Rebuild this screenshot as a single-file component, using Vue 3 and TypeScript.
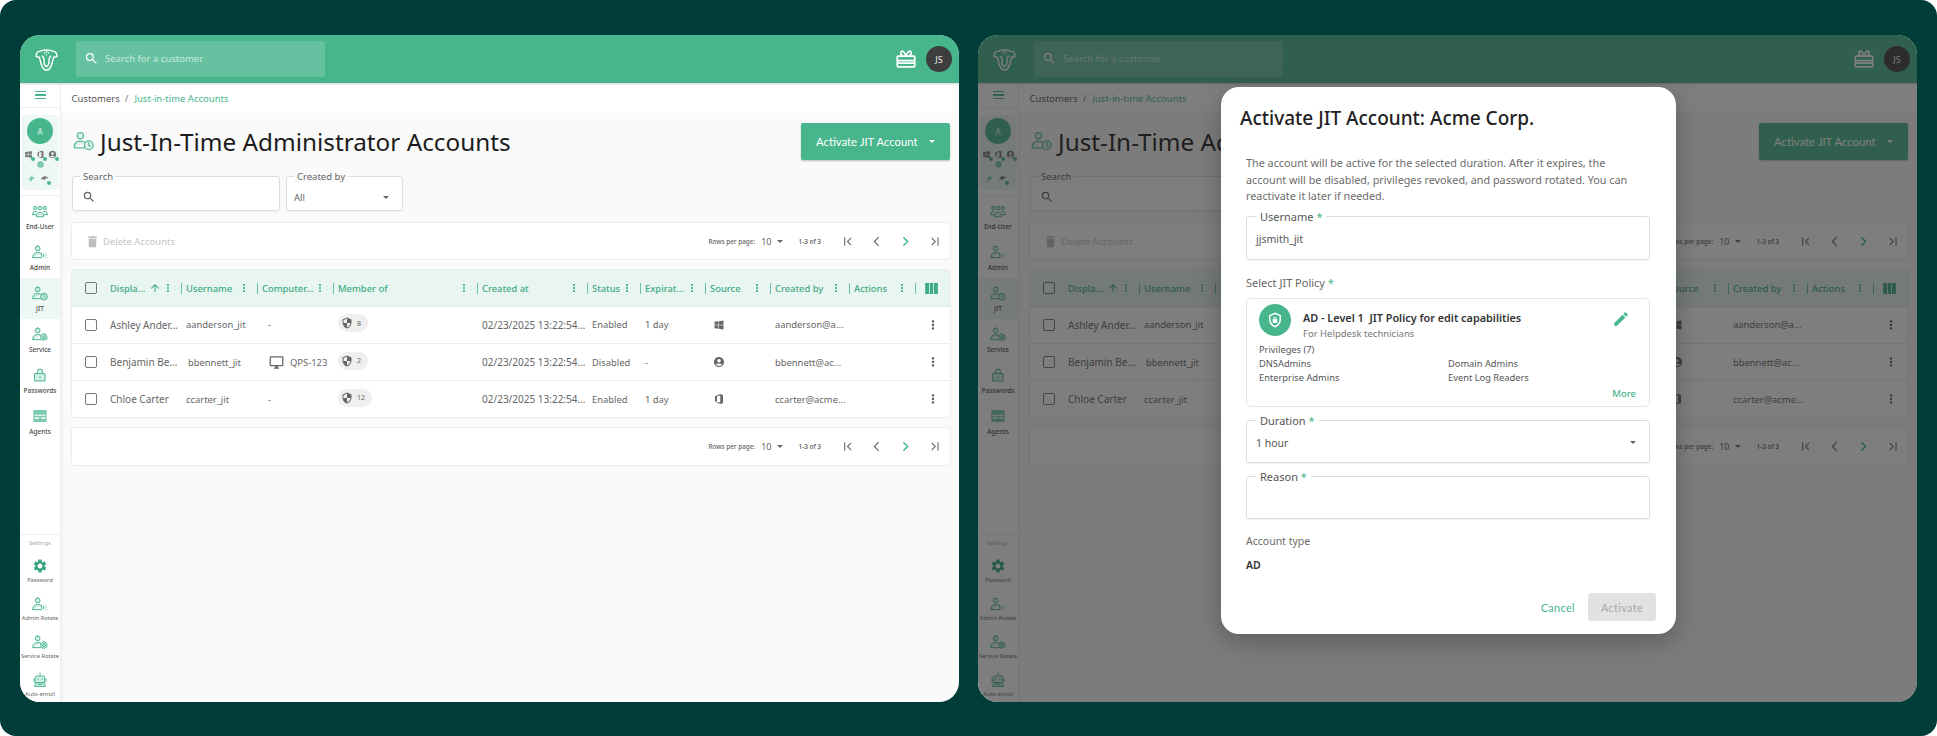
<script setup lang="ts">
const icons: Record<string, string> = {
  magnify: 'M15.5 14h-.79l-.28-.27A6.47 6.47 0 0 0 16 9.5 6.5 6.5 0 1 0 9.5 16c1.61 0 3.09-.59 4.23-1.57l.27.28v.79l5 4.99L20.49 19l-4.99-5zm-6 0C7.01 14 5 11.99 5 9.5S7.01 5 9.5 5 14 7.01 14 9.5 11.99 14 9.5 14z',
  trash: 'M6 19c0 1.1.9 2 2 2h8c1.1 0 2-.9 2-2V7H6v12zM19 4h-3.5l-1-1h-5l-1 1H5v2h14V4z',
  dots: 'M12 8c1.1 0 2-.9 2-2s-.9-2-2-2-2 .9-2 2 .9 2 2 2zm0 2c-1.1 0-2 .9-2 2s.9 2 2 2 2-.9 2-2-.9-2-2-2zm0 6c-1.1 0-2 .9-2 2s.9 2 2 2 2-.9 2-2-.9-2-2-2z',
  up: 'M4 12l1.41 1.41L11 7.83V20h2V7.83l5.58 5.59L20 12l-8-8-8 8z',
  columns: 'M4 5v14h5V5H4zm6 0v14h4V5h-4zm5 0v14h5V5h-5z',
  shield: 'M12 1L3 5v6c0 5.55 3.84 10.74 9 12 5.16-1.26 9-6.45 9-12V5l-9-4zm0 10.99h7c-.53 4.12-3.28 7.79-7 8.94V12H5V6.3l7-3.11v8.8z',
  monitor: 'M21 2H3c-1.1 0-2 .9-2 2v12c0 1.1.9 2 2 2h7v2H8v2h8v-2h-2v-2h7c1.1 0 2-.9 2-2V4c0-1.1-.9-2-2-2zm0 14H3V4h18v12z',
  windows: 'M3 5.5l7.5-1v7H3zM11.5 4.3L21 3v8.5h-9.5zM3 12.5h7.5v7L3 18.5zM11.5 12.5H21V21l-9.5-1.3z',
  account: 'M12 2C6.48 2 2 6.48 2 12s4.48 10 10 10 10-4.48 10-10S17.52 2 12 2zm0 4c1.93 0 3.5 1.57 3.5 3.5S13.93 13 12 13s-3.5-1.57-3.5-3.5S10.07 6 12 6zm0 14c-2.03 0-4.43-.82-6.14-2.88C7.55 15.8 9.68 15 12 15s4.45.8 6.14 2.12C16.43 19.18 14.03 20 12 20z',
  office: 'M4 6.5L14.5 2 20 4v16l-5.5 2L4 17.5l10.5 1.5V5L8 6.6v9.2l-4 1.7z',
  pencil: 'M3 17.25V21h3.75L17.81 9.94l-3.75-3.75L3 17.25zM20.71 7.04a1 1 0 0 0 0-1.41l-2.34-2.34a1 1 0 0 0-1.41 0l-1.83 1.83 3.75 3.75 1.83-1.83z',
  gear: 'M19.14 12.94c.04-.3.06-.61.06-.94 0-.32-.02-.64-.07-.94l2.03-1.58a.49.49 0 0 0 .12-.61l-1.92-3.32a.49.49 0 0 0-.59-.22l-2.39.96c-.5-.38-1.03-.7-1.62-.94l-.36-2.54a.48.48 0 0 0-.48-.41h-3.84c-.24 0-.43.17-.47.41l-.36 2.54c-.59.24-1.13.57-1.62.94l-2.39-.96c-.22-.08-.47 0-.59.22L2.74 8.87c-.12.21-.08.47.12.61l2.03 1.58c-.05.3-.09.63-.09.94s.02.64.07.94l-2.03 1.58a.49.49 0 0 0-.12.61l1.92 3.32c.12.22.37.29.59.22l2.39-.96c.5.38 1.03.7 1.62.94l.36 2.54c.05.24.24.41.48.41h3.84c.24 0 .44-.17.47-.41l.36-2.54c.59-.24 1.13-.56 1.62-.94l2.39.96c.22.08.47 0 .59-.22l1.92-3.32c.12-.22.07-.47-.12-.61l-2.01-1.58zM12 15.6c-1.98 0-3.6-1.62-3.6-3.6s1.62-3.6 3.6-3.6 3.6 1.62 3.6 3.6-1.62 3.6-3.6 3.6z',
  agents: 'M2 3h20v18H2zM4 10h16v1.5H4zM4 14h7v2H4zM14 14h6v2h-6z',
  lockShield: 'M12 2L4 5.5V11c0 5 3.4 9.7 8 11 4.6-1.3 8-6 8-11V5.5L12 2zm0 2.2l6 2.6V11c0 3.9-2.5 7.6-6 8.8-3.5-1.2-6-4.9-6-8.8V6.800zM12 7.500a2.300 2.300 0 0 0-2.300 2.300v1.200H9v5h6v-5h-.7V9.800A2.300 2.300 0 0 0 12 7.500zm0 1.300a1 1 0 0 1 1 1v1.200h-2V9.800a1 1 0 0 1 1-1z',
}

const person = 'M8.500 3a3.600 3.600 0 1 1 0 7.200A3.600 3.600 0 1 1 8.500 3zM1.500 20.500v-2.500C1.500 14.800 4.500 12.800 8.500 12.800c1.700 0 3.200.3 4.500 1M13 20.500H1.500'
const clock = 'M18 12.500a5 5 0 1 1 0 10 5 5 0 1 1 0-10zM18 14.800V17.500l1.800 1'
const cog = 'M18 11.500l1 1.700 2-.3.6 1.900 1.400 1.200-1.100 1.700.3 2-1.900.6-1.300 1.400-1.700-1-1.800.7-.7-1.900-1.800-.9.500-1.900-.7-1.800 1.800-.8.900-1.800zM18 15a2 2 0 1 1 0 4 2 2 0 1 1 0-4z'
const adminMark = 'M14.500 14v6.500M17.500 15.500v3.500M21 14v.1M21 17v.1M21 20v.1'
const team = 'M12 5a2.800 2.800 0 1 1 0 5.600A2.800 2.800 0 1 1 12 5zM4.800 5a2.500 2.500 0 1 1 0 5A2.500 2.500 0 1 1 4.800 5zM19.200 5a2.500 2.500 0 1 1 0 5 2.500 2.500 0 1 1 0-5zM1 17.500c0-3 1.600-5 3.800-5 1 0 1.800.3 2.500.9M23 17.500c0-3-1.600-5-3.800-5-1 0-1.800.3-2.500.9M6.500 20c0-3.500 2.500-6 5.500-6s5.500 2.500 5.500 6zM1 17.500h5M23 17.500h-5'
const lock = 'M4.500 10h15v11h-15zM8 10V7a4 4 0 0 1 8 0v3M12 14.500v2'
const robot = 'M12 1.500V4M5 8a2 2 0 0 1 2-2h10a2 2 0 0 1 2 2v8H5zM9 10.500v1M15 10.500v1M3 10v4M21 10v4M4 21c0-3 2-5 4-5h8c2 0 4 2 4 5zM9 18.500h6'

type NavItem = { label: string; d: string; mode: 'line' | 'fill' | 'pale'; active?: boolean }
const navItems: NavItem[] = [
  { label: 'End-User', d: team, mode: 'line' },
  { label: 'Admin', d: person + adminMark, mode: 'line' },
  { label: 'JIT', d: person + clock, mode: 'line', active: true },
  { label: 'Service', d: person + cog, mode: 'line' },
  { label: 'Passwords', d: lock, mode: 'line' },
  { label: 'Agents', d: icons.agents, mode: 'pale' },
]
const settingItems: NavItem[] = [
  { label: 'Password', d: icons.gear, mode: 'fill' },
  { label: 'Admin Rotate', d: person + adminMark, mode: 'line' },
  { label: 'Service Rotate', d: person + cog, mode: 'line' },
  { label: 'Auto-enroll', d: robot, mode: 'line' },
]

const columns = [
  { label: '', sep: false, kebab: false, check: true },
  { label: 'Displa...', sep: false, kebab: true, sort: true },
  { label: 'Username', sep: true, kebab: true },
  { label: 'Computer...', sep: true, kebab: true },
  { label: 'Member of', sep: true, kebab: true },
  { label: 'Created at', sep: true, kebab: true },
  { label: 'Status', sep: true, kebab: true },
  { label: 'Expirat...', sep: true, kebab: true },
  { label: 'Source', sep: true, kebab: true },
  { label: 'Created by', sep: true, kebab: true },
  { label: 'Actions', sep: true, kebab: true },
  { label: '', sep: true, kebab: false, picker: true },
]

const rows = [
  { name: 'Ashley Ander...', user: 'aanderson_jit', nudge: false, computer: '', groups: '8', status: 'Enabled', expiry: '1 day', source: 'windows', email: 'aanderson@a...' },
  { name: 'Benjamin Be...', user: 'bbennett_jit', nudge: true, computer: 'QPS-123', groups: '2', status: 'Disabled', expiry: '-', source: 'account', email: 'bbennett@ac...' },
  { name: 'Chloe Carter', user: 'ccarter_jit', nudge: false, computer: '', groups: '12', status: 'Enabled', expiry: '1 day', source: 'office', email: 'ccarter@acme...' },
]

const windows = [{ dialog: false }, { dialog: true }]
const pagerIcons = ['M17 7l-5 5 5 5M8 6v12', 'M15 6l-6 6 6 6', 'M9 6l6 6-6 6', 'M8 7l5 5-5 5M17 6v12']
</script>

<template>
  <div class="stage">
    <section v-for="(win, w) in windows" :key="w" class="window">
      <header class="topbar">
        <svg class="logo" viewBox="0 0 24 24">
          <path d="M1 8.500C1.500 4.500 3.500 3.500 5 3.500 8 1.500 16 1.500 19 3.500 20.500 3.500 22.500 4.500 23 8.500 22 9.500 20.500 9.500 19.500 9.500L17.500 17C16.500 20.500 14 23 12 23S7.500 20.500 6.500 17L4.500 9.500C3.500 9.500 2 9.500 1 8.500Z" />
          <path d="M7.500 8.500C9.500 9.500 9.800 12 9.500 16C10 18 11 19 12 19.500C13 19 14 18 14.500 16C14.200 12 14.500 9.500 16.500 8.500M10 5v.1M12 4v.1M14 5v.1M12 7v.1" />
        </svg>
        <div class="global-search">
          <svg class="search-ico" viewBox="0 0 24 24"><path :d="icons.magnify" /></svg>
          <span>Search for a customer</span>
        </div>
        <svg class="gift" viewBox="0 0 24 24">
          <path d="M2.500 8.500h19a1 1 0 0 1 1 1v11a1 1 0 0 1-1 1h-19a1 1 0 0 1-1-1v-11a1 1 0 0 1 1-1zM1.500 14h21M1.500 17h21M12 8C10.500 5 9.500 2.500 7.500 2.500S5 6 7.500 8M12 8c1.500-3 2.500-5.500 4.500-5.500S19 6 16.500 8" />
        </svg>
        <div class="me">JS</div>
      </header>

      <div class="workspace">
        <aside class="rail">
          <div class="burger"><i></i><i></i><i></i></div>
          <div class="tenant">
            <div class="tenant-avatar">A</div>
            <div class="tiny-row">
              <span class="tiny"><svg viewBox="0 0 24 24"><path :d="icons.windows" /></svg></span>
              <span class="tiny"><svg viewBox="0 0 24 24"><path :d="icons.office" /></svg></span>
              <span class="tiny"><svg viewBox="0 0 24 24"><path :d="icons.account" /></svg></span>
            </div>
            <svg class="tiny-globe" viewBox="0 0 24 24"><path d="M12 2a10 10 0 1 0 0 20 10 10 0 0 0 0-20zM6 6l12 12M18 6L6 18" /></svg>
            <div class="tiny-row low">
              <svg class="tiny-bolt" viewBox="0 0 24 24"><path d="M16 1L3 15h7l-3 8 14-15h-8z" /></svg>
              <span class="tiny"><svg viewBox="0 0 24 24"><path d="M3 15c0-5 5-9 10-9 4 0 8 2 9 6-4-1-7 0-9 1l-1 5-2-4c-2 0-4 0-7 1z" /></svg></span>
            </div>
          </div>
          <nav class="nav">
            <a v-for="item in navItems" :key="item.label" class="nav-item bold" :class="{ on: item.active }">
              <svg viewBox="0 0 24 24" :class="item.mode"><path :d="item.d" /></svg>
              <span>{{ item.label }}</span>
            </a>
          </nav>
          <div class="settings">
            <div class="settings-title">Settings</div>
            <a v-for="item in settingItems" :key="item.label" class="nav-item small">
              <svg viewBox="0 0 24 24" :class="item.mode"><path :d="item.d" /></svg>
              <span>{{ item.label }}</span>
            </a>
          </div>
        </aside>

        <main class="content">
          <div class="crumbs"><span>Customers</span><em>/</em><b>Just-in-time Accounts</b></div>
          <div class="page">
            <div class="title-row">
              <svg class="title-ico" viewBox="0 0 24 24"><path :d="person + clock" /></svg>
              <h1>Just-In-Time Administrator Accounts</h1>
              <button class="primary">Activate JIT Account<i class="caret light"></i></button>
            </div>
            <div class="filters">
              <div class="field search">
                <label>Search</label>
                <svg viewBox="0 0 24 24"><path :d="icons.magnify" /></svg>
              </div>
              <div class="field created">
                <label>Created by</label>
                <span>All</span><i class="caret"></i>
              </div>
            </div>
            <div class="card bar">
              <div class="del"><svg viewBox="0 0 24 24"><path :d="icons.trash" /></svg>Delete Accounts</div>
              <div class="pager">
                <span class="rpp">Rows per page:</span><span class="rpp-val">10</span><i class="caret"></i>
                <span class="range">1-3 of 3</span>
                <svg v-for="(d, p) in pagerIcons" :key="p" viewBox="0 0 24 24" :class="{ go: p === 2 }"><path :d="d" /></svg>
              </div>
            </div>
            <div class="card table">
              <div class="thead grid">
                <div v-for="(c, i) in columns" :key="i" class="th" :class="{ sep: c.sep, center: c.check }">
                  <span v-if="c.check" class="box"></span>
                  <span>{{ c.label }}</span>
                  <svg v-if="c.sort" class="sort" viewBox="0 0 24 24"><path :d="icons.up" /></svg>
                  <svg v-if="c.kebab" class="kebab" viewBox="0 0 24 24"><path :d="icons.dots" /></svg>
                  <svg v-if="c.picker" class="picker" viewBox="0 0 24 24"><path :d="icons.columns" /></svg>
                </div>
              </div>
              <div v-for="r in rows" :key="r.user" class="tr grid">
                <div class="td center"><span class="box"></span></div>
                <div class="td first wide">{{ r.name }}</div>
                <div class="td" :class="{ nudge: r.nudge }">{{ r.user }}</div>
                <div class="td">
                  <template v-if="r.computer">
                    <svg class="pc" viewBox="0 0 24 24"><path :d="icons.monitor" /></svg>{{ r.computer }}
                  </template>
                  <span v-else class="dash">-</span>
                </div>
                <div class="td"><span class="chip"><svg viewBox="0 0 24 24"><path :d="icons.shield" /></svg>{{ r.groups }}</span></div>
                <div class="td wide">02/23/2025 13:22:54...</div>
                <div class="td">{{ r.status }}</div>
                <div class="td">{{ r.expiry }}</div>
                <div class="td"><svg class="src" viewBox="0 0 24 24"><path :d="icons[r.source]" /></svg></div>
                <div class="td">{{ r.email }}</div>
                <div class="td"></div>
                <div class="td center"><svg class="row-menu" viewBox="0 0 24 24"><path :d="icons.dots" /></svg></div>
              </div>
            </div>
            <div class="card bar end">
              <div class="pager">
                <span class="rpp">Rows per page:</span><span class="rpp-val">10</span><i class="caret"></i>
                <span class="range">1-3 of 3</span>
                <svg v-for="(d, p) in pagerIcons" :key="p" viewBox="0 0 24 24" :class="{ go: p === 2 }"><path :d="d" /></svg>
              </div>
            </div>
          </div>
        </main>
      </div>

      <div v-if="win.dialog" class="scrim">
        <div class="dialog">
          <h2>Activate JIT Account: Acme Corp.</h2>
          <div class="dialog-body">
            <p class="intro">The account will be active for the selected duration. After it expires, the account will be disabled, privileges revoked, and password rotated. You can reactivate it later if needed.</p>
            <div class="input tall">
              <label>Username <u>*</u></label>
              <span>jjsmith_jit</span>
            </div>
            <div class="policy-label">Select JIT Policy <u>*</u></div>
            <div class="policy">
              <div class="policy-head">
                <div class="policy-badge"><svg viewBox="0 0 24 24"><path fill-rule="evenodd" :d="icons.lockShield" /></svg></div>
                <div class="policy-name">
                  <strong>AD - Level 1&nbsp; JIT Policy for edit capabilities</strong>
                  <small>For Helpdesk technicians</small>
                </div>
                <svg class="pen" viewBox="0 0 24 24"><path :d="icons.pencil" /></svg>
              </div>
              <div class="priv-title">Privileges (7)</div>
              <div class="priv-grid">
                <span>DNSAdmins</span><span>Domain Admins</span>
                <span>Enterprise Admins</span><span>Event Log Readers</span>
              </div>
              <div class="more">More</div>
            </div>
            <div class="input">
              <label>Duration <u>*</u></label>
              <span>1 hour</span><i class="caret"></i>
            </div>
            <div class="input">
              <label>Reason <u>*</u></label>
            </div>
            <div class="type-label">Account type</div>
            <div class="type-value">AD</div>
          </div>
          <div class="dialog-foot">
            <a class="cancel">Cancel</a>
            <button class="activate" disabled>Activate</button>
          </div>
        </div>
      </div>
    </section>
  </div>
</template>

<style>
html, body { margin: 0; background: #ffffff; }
</style>

<style scoped>
* { box-sizing: border-box; }
.stage {
  width: 1937px; height: 736px; background: #003d38; border-radius: 16px;
  padding: 35px 20px 34px; display: flex; gap: 19px;
  font-family: "Noto Sans", "Open Sans", sans-serif; color: #555; overflow: hidden;
}
.window {
  position: relative; width: 939px; height: 667px; border-radius: 20px; overflow: hidden;
  background: #fafafa; display: flex; flex-direction: column;
}
svg { display: block; fill: currentColor; flex: none; }

.topbar { height: 48px; background: #48b68d; display: flex; align-items: center; padding: 0 7px 0 15px; box-shadow: 0 1px 2px rgba(0,0,0,.2); position: relative; z-index: 1; flex: none; }
.logo { width: 23px; height: 23px; fill: none; stroke: #fff; stroke-width: 1.500; stroke-linejoin: round; stroke-linecap: round; }
.global-search { width: 249px; height: 36px; margin-left: 18px; background: rgba(255,255,255,.16); border-radius: 3px; display: flex; align-items: center; padding: 0 0 1px 8px; color: rgba(255,255,255,.68); font-size: 9.500px; }
.search-ico { width: 15px; height: 15px; margin-right: 6px; color: #fff; }
.gift { width: 20px; height: 20px; margin-left: auto; margin-right: 10px; fill: none; stroke: #fff; stroke-width: 2; stroke-linejoin: round; }
.me { width: 26px; height: 26px; border-radius: 50%; background: #3d3d3d; color: #eee; font-size: 9px; display: flex; align-items: center; justify-content: center; }

.workspace { flex: 1; display: flex; min-height: 0; }
.rail { width: 41px; background: #fff; border-right: 1px solid #eee; box-shadow: 1px 0 2px rgba(0,0,0,.05); display: flex; flex-direction: column; flex: none; }
.burger { height: 25px; border-bottom: 1px solid #eee; display: flex; flex-direction: column; justify-content: center; align-items: center; gap: 2px; flex: none; }
.burger i { width: 11px; height: 1.300px; background: #48b68d; }
.tenant { margin: 7px 1.500px 5px; height: 75px; background: #edf7f3; border-radius: 4px; display: flex; flex-direction: column; align-items: center; padding-top: 3px; flex: none; }
.tenant-avatar { width: 26px; height: 26px; border-radius: 50%; background: #48b68d; color: #e9f6f1; font-size: 8px; display: flex; align-items: center; justify-content: center; }
.tiny-row { display: flex; gap: 3px; margin-top: 6px; align-items: center; height: 9px; }
.tiny-row.low { margin-top: 5px; gap: 4px; margin-right: 5px; height: 10px; }
.tiny { position: relative; width: 9px; height: 9px; color: #777; }
.tiny svg { width: 9px; height: 9px; }
.tiny::after { content: ""; position: absolute; right: -2px; bottom: -2px; width: 4px; height: 4px; border-radius: 50%; background: #48b68d; }
.tiny-globe { width: 7px; height: 7px; margin-top: 2px; fill: #8fd0b8; stroke: #48b68d; stroke-width: 2; }
.tiny-bolt { width: 9px; height: 11px; color: #7ccbae; }
.nav { border-top: 1px solid #eee; flex: none; }
.nav-item { display: flex; flex-direction: column; align-items: center; color: #4a4a4a; white-space: nowrap; }
.nav-item svg { width: 16px; height: 16px; }
.nav-item svg.line { fill: rgba(72,182,141,.22); stroke: #48b68d; stroke-width: 1.500; stroke-linejoin: round; stroke-linecap: round; }
.nav-item svg.fill { fill: #3aa67f; }
.nav-item svg.pale { fill: #7ccbae; fill-rule: evenodd; }
.nav-item.bold { height: 41px; padding-top: 7px; font-size: 6.500px; font-weight: 500; }
.nav-item.bold span { line-height: 14px; margin-top: 1px; }
.nav-item.on { background: #edf7f3; }
.settings { margin-top: auto; height: 168px; border-top: 1px solid #eee; flex: none; }
.settings-title { height: 17px; font-size: 5.800px; color: #aaa; text-align: center; line-height: 16px; }
.nav-item.small { height: 38px; padding-top: 6px; font-size: 5.700px; color: #666; }
.nav-item.small:last-child { height: 36px; }
.nav-item.small span { line-height: 13px; }

.content { flex: 1; min-width: 0; display: flex; flex-direction: column; }
.crumbs { height: 30px; background: #fff; display: flex; align-items: center; padding-left: 10.500px; font-size: 9.500px; color: #555; flex: none; }
.crumbs em { font-style: normal; margin: 0 6px 0 5px; color: #777; }
.crumbs b { font-weight: 400; color: #48b68d; }
.page { flex: 1; padding: 10px 9px 0 11px; }
.title-row { height: 37px; display: flex; align-items: center; margin-bottom: 16px; }
.title-ico { width: 21px; height: 21px; margin: 0 6px 2px 1px; fill: rgba(72,182,141,.15); stroke: #5dbd9a; stroke-width: 1.500; stroke-linejoin: round; stroke-linecap: round; }
h1 { margin: 0; font-size: 24.300px; font-weight: 400; color: #1c1c1c; line-height: 37px; }
.primary { margin-left: auto; width: 149px; height: 37px; background: #48b68d; color: #fff; border: 0; border-radius: 2px; box-shadow: 0 1px 2px rgba(0,0,0,.25); display: flex; align-items: center; padding: 0 15px; font: 400 11.300px "Lato", sans-serif; letter-spacing: 0; }
.caret { display: block; width: 0; height: 0; border: 3px solid transparent; border-top: 3.500px solid #666; border-bottom: 0; flex: none; }
.caret.light { border-top-color: #fff; margin-left: auto; }

.filters { display: flex; gap: 6px; margin-bottom: 12px; }
.field { position: relative; height: 35px; background: #fff; border: 1px solid #ddd; border-radius: 3px; display: flex; align-items: center; font-size: 9.500px; color: #666; box-shadow: 0 1px 1px rgba(0,0,0,.05); }
.field label { position: absolute; left: 7px; top: -6px; background: #fafafa; padding: 0 3px; font-size: 9.500px; line-height: 12px; color: #666; }
.search { width: 208px; padding: 7px 0 0 9px; }
.search svg { width: 14px; height: 14px; color: #666; }
.created { width: 117px; padding: 7px 13px 0 7px; justify-content: space-between; }

.card { background: #fff; border-radius: 3px; box-shadow: 0 0 0 1px #ececec; }
.bar { height: 36px; margin-bottom: 11px; display: flex; align-items: center; justify-content: space-between; padding-left: 13px; }
.bar.end { justify-content: flex-end; height: 37px; }
.del { display: flex; align-items: center; color: #c4c4c4; font-size: 9.500px; }
.del svg { width: 15px; height: 15px; margin-right: 3px; color: #bdbdbd; }
.pager { display: flex; align-items: center; margin-right: 1.500px; }
.pager svg { width: 17px; height: 17px; margin: 0 6px; fill: none; stroke: #666; stroke-width: 1.500; }
.pager svg.go { stroke: #3fb389; stroke-width: 2; }
.rpp { font-size: 6.400px; font-weight: 500; color: #666; }
.rpp-val { font-size: 9px; margin: 0 5px 0 6px; color: #666; }
.range { font-size: 6.400px; font-weight: 500; margin: 0 6px 0 16px; color: #555; width: 28px; white-space: nowrap; }

.table { margin-bottom: 11px; }
.grid { display: grid; grid-template-columns: 38px 71px 76px 76px 144px 110px 53px 65px 65px 79px 66px 35px; }
.thead { height: 36px; background: #e8f5f0; border-radius: 3px 3px 0 0; box-shadow: 0 1px 0 #dfe9e5; }
.th { display: flex; align-items: center; min-width: 0; font-size: 9.400px; font-weight: 500; color: #3fab83; white-space: nowrap; padding-right: 7px; }
.th.center { justify-content: center; padding: 0; }
.th.sep::before { content: ""; width: 1px; height: 11px; background: #6cc3a3; margin-right: 4px; flex: none; }
.sort { width: 12px; height: 12px; margin-left: 4px; color: #3fab83; }
.kebab { width: 12px; height: 12px; margin-left: auto; color: #3fab83; }
.picker { width: 19px; height: 19px; margin-left: auto; margin-right: 2px; color: #3fab83; }
.box { display: block; width: 12px; height: 12px; border: 1.200px solid #777; border-radius: 2px; }
.tr { height: 37px; border-top: 1px solid #ececec; }
.thead + .tr { border-top: 0; }
.td { display: flex; align-items: center; padding-left: 5px; font-size: 9.400px; color: #666; white-space: nowrap; min-width: 0; }
.td.wide { font-size: 10px; }
.td.first { padding-left: 0; }
.td.center { justify-content: center; padding: 0; }
.td.nudge { padding-left: 7px; }
.dash { margin-left: 6px; }
.pc { width: 15px; height: 15px; margin: 0 6px 0 7px; color: #666; }
.chip { display: flex; align-items: center; height: 18px; margin-top: -3px; padding: 0 7px 0 3px; background: #efefef; border-radius: 9px; font-size: 7px; color: #666; gap: 4px; }
.chip svg { width: 12px; height: 12px; color: #666; }
.src { width: 12px; height: 12px; margin-left: 3px; color: #666; }
.row-menu { width: 14px; height: 14px; color: #555; }

.scrim { position: absolute; inset: 0; background: rgba(33,33,33,.58); z-index: 5; display: flex; justify-content: center; align-items: flex-start; padding: 52px 0 0 2px; }
.dialog { width: 455px; height: 547px; background: #fff; border-radius: 18px; padding: 18px 26px 0 25px; box-shadow: 0 8px 24px rgba(0,0,0,.25); display: flex; flex-direction: column; }
h2 { margin: 0 0 24px -6px; font-size: 19px; font-weight: 500; color: #222; line-height: 26px; }
.dialog-body { font-size: 10.500px; }
.intro { margin: 0 0 11.500px; max-width: 392px; font-size: 10.800px; line-height: 16.500px; color: #6b6b6b; }
.input { position: relative; height: 43px; border: 1px solid #ddd; border-radius: 3px; margin-bottom: 13px; display: flex; align-items: center; justify-content: space-between; padding: 2px 13px 0 9px; font-size: 10.500px; color: #555; box-shadow: 0 1px 1px rgba(0,0,0,.05); }
.input.tall { height: 44px; margin-bottom: 15px; }
.input label { position: absolute; left: 9px; top: -7px; padding: 0 4px; background: #fff; font-size: 11px; line-height: 13px; color: #555; }
u { text-decoration: none; color: #48b68d; }
.policy-label { height: 16px; line-height: 16px; font-size: 11px; color: #666; margin-bottom: 7px; }
.policy { height: 109px; border: 1px solid #e6e6e6; border-radius: 4px; margin-bottom: 13px; padding: 5px 13px 0 12px; color: #555; }
.policy-head { display: flex; align-items: flex-start; }
.policy-badge { width: 32px; height: 32px; border-radius: 50%; background: #48b68d; color: #fff; display: flex; align-items: center; justify-content: center; }
.policy-badge svg { width: 18px; height: 18px; fill-rule: evenodd; }
.policy-name { margin-left: 12px; display: flex; flex-direction: column; }
.policy-name strong { font-size: 10.850px; font-weight: 600; color: #333; line-height: 16px; margin-top: 6px; }
.policy-name small { font-size: 9.500px; color: #777; line-height: 16px; }
.pen { width: 18px; height: 18px; margin: 6px 6px 0 auto; color: #48b68d; }
.priv-title { font-size: 9.300px; line-height: 14px; margin-top: 1px; }
.priv-grid { display: grid; grid-template-columns: 189px 1fr; font-size: 9.300px; line-height: 14px; }
.more { text-align: right; color: #48b68d; font-size: 9.500px; font-weight: 500; line-height: 14px; margin-top: 2px; }
.type-label { font-size: 10.500px; color: #6b6b6b; line-height: 16px; margin-top: 14px; }
.type-value { font-size: 10.500px; font-weight: 600; color: #333; line-height: 16px; margin-top: 8px; }
.dialog-foot { margin-top: auto; margin-bottom: 13px; margin-right: -6px; display: flex; align-items: center; justify-content: flex-end; gap: 13px; }
.cancel { color: #48b68d; font: 400 11px "Lato", sans-serif; letter-spacing: .3px; }
.activate { width: 68px; height: 28px; background: #e2e2e2; color: #a8a8a8; border: 0; border-radius: 3px; font: 400 11px "Lato", sans-serif; letter-spacing: .3px; }
</style>
